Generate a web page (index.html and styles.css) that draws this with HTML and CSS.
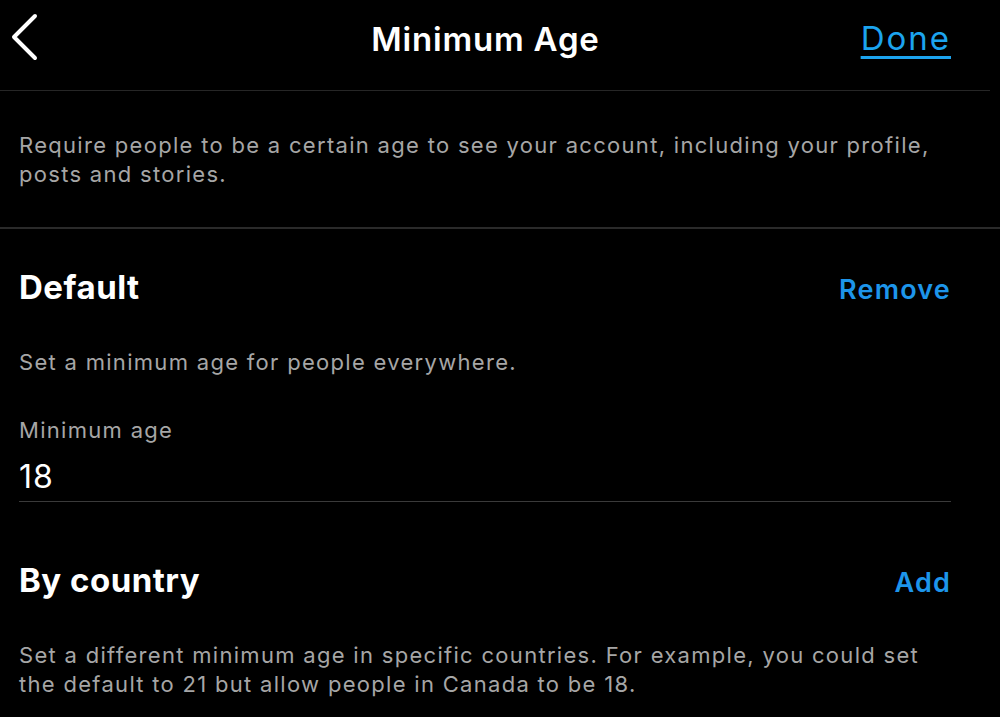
FILE: index.html
```html
<!DOCTYPE html>
<html lang="en">
<head>
    <meta charset="UTF-8">
    <meta name="viewport" content="width=device-width, initial-scale=1.0">
    <title>Minimum Age</title>
    <link rel="stylesheet" href="styles.css">
</head>
<body>
    <div class="top-bar">
        <button class="back-btn" aria-label="Back">
            <svg width="30" height="48" viewBox="0 0 30 48">
                <path d="M25 3 L4 24 L25 45" fill="none" stroke="#fff" stroke-width="4" stroke-linecap="round" stroke-linejoin="round"/>
            </svg>
        </button>
        <h1 class="page-title">Minimum Age</h1>
        <a class="done-link" href="#">Done</a>
    </div>

    <div class="intro">
        <p class="help-text">Require people to be a certain age to see your account, including your profile, posts and stories.</p>
    </div>

    <div class="content">
        <div class="section-head">
            <h2>Default</h2>
            <a class="action-link" href="#">Remove</a>
        </div>
        <p class="help-text section-desc">Set a minimum age for people everywhere.</p>

        <div class="field">
            <div class="field-label">Minimum age</div>
            <div class="field-value">18</div>
        </div>

        <div class="section-head country-head">
            <h2>By country</h2>
            <a class="action-link" href="#">Add</a>
        </div>
        <p class="help-text section-desc country-desc">Set a different minimum age in specific countries. For example, you could set the default to 21 but allow people in Canada to be 18.</p>
    </div>
</body>
</html>
```

FILE: styles.css
```css
body {
    margin: 0;
    padding: 0;
    background: #000;
    color: #fff;
    font-family: Inter, "Noto Sans", sans-serif;
    overflow: hidden;
}

.top-bar {
    height: 90px;
    display: grid;
    grid-template-columns: 1fr auto 1fr;
    align-items: center;
    padding: 0 29px 0 10px;
    border-bottom: 1px solid #262626;
    margin-right: 10px;
}

.back-btn {
    background: none;
    border: none;
    padding: 0;
    width: 30px;
    height: 48px;
    margin-top: -17px;
    cursor: pointer;
}

.back-btn svg {
    display: block;
}

.page-title {
    margin: 0 0 12px 0;
    font-size: 33px;
    font-weight: 600;
    letter-spacing: 0.8px;
}

.done-link {
    justify-self: end;
    color: #1ca4ef;
    font-size: 33px;
    letter-spacing: 2px;
    margin: 0 10px 15px 0;
    text-decoration-thickness: 3px;
    text-underline-offset: 6px;
}

.intro {
    padding: 40px 49px 38px 19px;
    border-bottom: 2px solid #2a2a2a;
}

.help-text {
    margin: 0;
    font-size: 22px;
    line-height: 29px;
    color: #a6a6a6;
    letter-spacing: 1.3px;
}

.content {
    padding: 0 49px 0 19px;
}

.section-head {
    display: flex;
    justify-content: space-between;
    align-items: baseline;
    margin-top: 40px;
}

.section-head h2 {
    margin: 0;
    font-size: 33px;
    line-height: 36px;
    font-weight: 700;
    letter-spacing: 0.5px;
}

.action-link {
    color: #1d95ea;
    font-size: 27px;
    font-weight: 600;
    letter-spacing: 1.2px;
    text-decoration: none;
}

.section-desc {
    margin-top: 42px;
}

.field {
    margin-top: 39px;
    border-bottom: 1px solid #3a3a3a;
    padding-bottom: 6px;
}

.field-label {
    font-size: 22px;
    line-height: 29px;
    color: #a6a6a6;
    letter-spacing: 1.3px;
}

.field-value {
    margin-top: 14px;
    font-size: 32px;
    line-height: 36px;
    letter-spacing: 1px;
}

.country-head {
    margin-top: 60px;
}

.country-desc {
    margin-top: 42px;
}
```
